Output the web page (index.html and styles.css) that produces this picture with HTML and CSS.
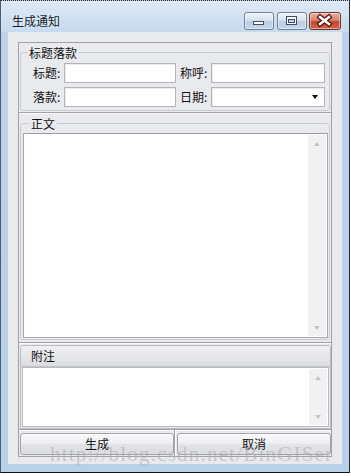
FILE: index.html
```html
<!DOCTYPE html>
<html lang="zh">
<head>
<meta charset="utf-8">
<title>生成通知</title>
<link rel="stylesheet" href="styles.css">
</head>
<body>
<div class="window">
  <div class="titlebar">
    <span class="title">生成通知</span>
    <div class="caption-buttons">
      <button class="cap cap-min" aria-label="最小化">
        <svg viewBox="0 0 28 16" width="28" height="16"><rect x="8.5" y="8.5" width="10" height="3" fill="#fff" stroke="#3e4e63"/></svg>
      </button>
      <button class="cap cap-max" aria-label="最大化">
        <svg viewBox="0 0 28 16" width="28" height="16"><rect x="8.5" y="3.5" width="10" height="8" fill="#fff" stroke="#3e4e63"/><rect x="10.5" y="6.5" width="6" height="3" fill="#c4d3e4" stroke="#3e4e63"/></svg>
      </button>
      <button class="cap cap-close" aria-label="关闭">
        <svg viewBox="0 0 30 16" width="30" height="16"><path d="M10 4 L19 11 M19 4 L10 11" stroke="#4a1710" stroke-width="5" stroke-linecap="square" fill="none"/><path d="M10 4 L19 11 M19 4 L10 11" stroke="#fff" stroke-width="2.6" stroke-linecap="square" fill="none"/></svg>
      </button>
    </div>
  </div>
  <div class="client">
    <div class="layout">
      <div class="row row-header">
        <fieldset class="group group-header">
          <legend>标题落款</legend>
          <div class="form-grid">
            <label class="lbl">标题:</label>
            <input class="txt" type="text">
            <label class="lbl lbl-second">称呼:</label>
            <input class="txt" type="text">
            <label class="lbl">落款:</label>
            <input class="txt" type="text">
            <label class="lbl lbl-second">日期:</label>
            <div class="combo"><span class="combo-arrow"></span></div>
          </div>
        </fieldset>
      </div>
      <div class="row row-body">
        <fieldset class="group group-body">
          <legend>正文</legend>
          <div class="memo memo-body">
            <div class="memo-text"></div>
            <div class="vscroll"><span class="arrow arrow-up"></span><span class="arrow arrow-down"></span></div>
          </div>
        </fieldset>
      </div>
      <div class="row row-note">
        <div class="panel">
          <div class="panel-head">附注</div>
          <div class="panel-body">
            <div class="memo memo-note">
              <div class="memo-text"></div>
              <div class="vscroll"><span class="arrow arrow-up"></span><span class="arrow arrow-down"></span></div>
            </div>
          </div>
        </div>
      </div>
      <div class="row row-buttons">
        <div class="cell cell-first"><button class="btn">生成</button></div>
        <div class="cell cell-second"><button class="btn">取消</button></div>
      </div>
    </div>
    <div class="watermark">http://blog.csdn.net/BinGISer</div>
  </div>
</div>
</body>
</html>
```
FILE: styles.css
```css
* { box-sizing: border-box; }

html, body {
  margin: 0;
  padding: 0;
  background: #ffffff;
}

body {
  width: 351px;
  height: 476px;
  overflow: hidden;
  font-family: "Noto Sans CJK SC", "Noto Sans", sans-serif;
  font-size: 12px;
  color: #111;
}

.window {
  position: relative;
  width: 350px;
  height: 473px;
  border: 1px solid #4d5d70;
  border-top: 1px dotted #222;
  border-right-color: #2a2f36;
  border-bottom-color: #111;
  padding: 0 7px 8px 7px;
  background: linear-gradient(to bottom, #dfe9f5 0px, #c6d9ee 31px, #bcd2ea 31px, #b9d0e9 100%);
  display: flex;
  flex-direction: column;
}

.titlebar {
  height: 31px;
  display: flex;
  align-items: flex-start;
  justify-content: space-between;
}

.title {
  margin-top: 13px;
  margin-left: 4px;
  line-height: 13px;
  font-size: 12px;
  color: #0f1b2b;
  text-shadow: 0 0 4px rgba(255, 255, 255, 0.8);
}

.caption-buttons {
  display: flex;
  margin-top: 11px;
  margin-right: 1px;
}

.cap {
  height: 18px;
  padding: 0;
  margin: 0;
  border: 1px solid #6f8197;
  border-radius: 3px;
  display: flex;
  align-items: center;
  justify-content: center;
  box-shadow: inset 0 0 0 1px rgba(255, 255, 255, 0.45);
}

.cap svg { display: block; }

.cap-min, .cap-max {
  width: 30px;
  background: linear-gradient(to bottom, #eef3f9 0%, #d6e2ef 45%, #bccde2 55%, #c7d7ea 100%);
}

.cap-max { margin-left: 3px; }

.cap-close {
  width: 32px;
  margin-left: 2px;
  border-color: #7a3327;
  background: linear-gradient(to bottom, #eab3a6 0%, #d9826f 45%, #c4452c 55%, #d0654c 100%);
}

.client {
  position: relative;
  height: 432px;
  background: #e9eaee;
  padding: 10px 0 0 10px;
}

.layout {
  width: 314px;
  height: 415px;
  border: 1px solid #a2a2a4;
  display: flex;
  flex-direction: column;
}

.row {
  flex: none;
}

.row + .row {
  border-top: 1px solid #a2a2a4;
  box-shadow: inset 0 1px 0 #fbfbfc;
}

.row-header { height: 69px; }
.row-body { height: 230px; }
.row-note { height: 87px; }
.row-buttons { height: 27px; display: flex; }

.group {
  margin: 0;
  padding: 0;
  border: 1px solid #c9ccd1;
  border-radius: 3px;
  min-width: 0;
}

.group legend {
  margin-left: 6px;
  padding: 0 2px;
  line-height: 13px;
  font-size: 12px;
  color: #111;
}

.group-header {
  margin: 3px 1px 1px 1px;
  width: 310px;
}

.form-grid {
  display: grid;
  grid-template-columns: 31px 112px 35px 114px;
  grid-template-rows: 20px 20px;
  row-gap: 4px;
  padding: 4px 0 3px 12px;
}

.lbl {
  line-height: 20px;
  white-space: nowrap;
  color: #111;
}

.lbl-second { padding-left: 4px; }

.txt, .combo {
  width: 100%;
  height: 20px;
  margin: 0;
  padding: 0 2px;
  border: 1px solid #b2b4b9;
  background: #fff;
  font: inherit;
  box-shadow: inset 1px 1px 0 #ececec;
}

.combo {
  display: flex;
  align-items: center;
  justify-content: flex-end;
  padding-right: 6px;
}

.combo-arrow {
  width: 0;
  height: 0;
  border-left: 3px solid transparent;
  border-right: 3px solid transparent;
  border-top: 4px solid #111;
}

.group-body {
  margin: 4px 1px 2px 1px;
  width: 310px;
  padding: 3px 1px 1px 2px;
}

.memo {
  display: flex;
  background: #fff;
  border: 1px solid #a9aaad;
  border-top-color: #9c9c9f;
  padding: 1px;
}

.memo-body { height: 205px; }

.memo-text { flex: 1; background: #fff; }

.vscroll {
  width: 18px;
  background: #f1f1f3;
  display: flex;
  flex-direction: column;
  justify-content: space-between;
}

.arrow {
  height: 17px;
  display: flex;
  align-items: center;
  justify-content: center;
}

.arrow::before {
  content: "";
  width: 0;
  height: 0;
  border-left: 3.5px solid transparent;
  border-right: 3.5px solid transparent;
}

.arrow-up::before { border-bottom: 4px solid #c3c4c8; }
.arrow-down::before { border-top: 4px solid #c3c4c8; }

.panel {
  margin: 2px 0 0 1px;
  width: 311px;
  height: 84px;
  border: 1px solid #bcbdc1;
  border-radius: 3px 3px 0 0;
  display: flex;
  flex-direction: column;
}

.panel-head {
  height: 21px;
  line-height: 20px;
  padding-left: 10px;
  border-bottom: 1px solid #c2c3c7;
  background: linear-gradient(to bottom, #f0f0f2 0%, #e4e5e8 60%, #dcdde1 100%);
  border-radius: 2px 2px 0 0;
  color: #111;
}

.panel-body {
  flex: 1;
  padding: 0 1px 1px 1px;
  display: flex;
  flex-direction: column;
}

.memo-note {
  flex: 1;
  border-color: #b9babd;
}

.cell {
  height: 100%;
  padding-top: 3px;
}

.cell-first {
  width: 155px;
  padding-left: 1px;
}

.cell-second {
  width: 157px;
  padding-left: 2px;
  border-left: 1px solid #a2a2a4;
  box-shadow: inset 1px 0 0 #fbfbfc;
}

.btn {
  display: block;
  width: 154px;
  height: 22px;
  margin: 0;
  padding: 0;
  border: 1px solid #a3a4a8;
  border-radius: 3px;
  background: linear-gradient(to bottom, #f8f8f9 0%, #eeeff1 45%, #e2e3e6 55%, #dcdde0 100%);
  box-shadow: inset 0 1px 0 #ffffff;
  font-family: "Noto Sans CJK SC", "Noto Sans", sans-serif;
  font-size: 12px;
  color: #111;
  line-height: 20px;
}

.watermark {
  position: absolute;
  left: 42px;
  top: 410px;
  font-family: "Liberation Serif", serif;
  font-size: 21px;
  letter-spacing: 1.2px;
  line-height: 24px;
  color: rgba(170, 170, 170, 0.55);
  white-space: nowrap;
  pointer-events: none;
}
```
